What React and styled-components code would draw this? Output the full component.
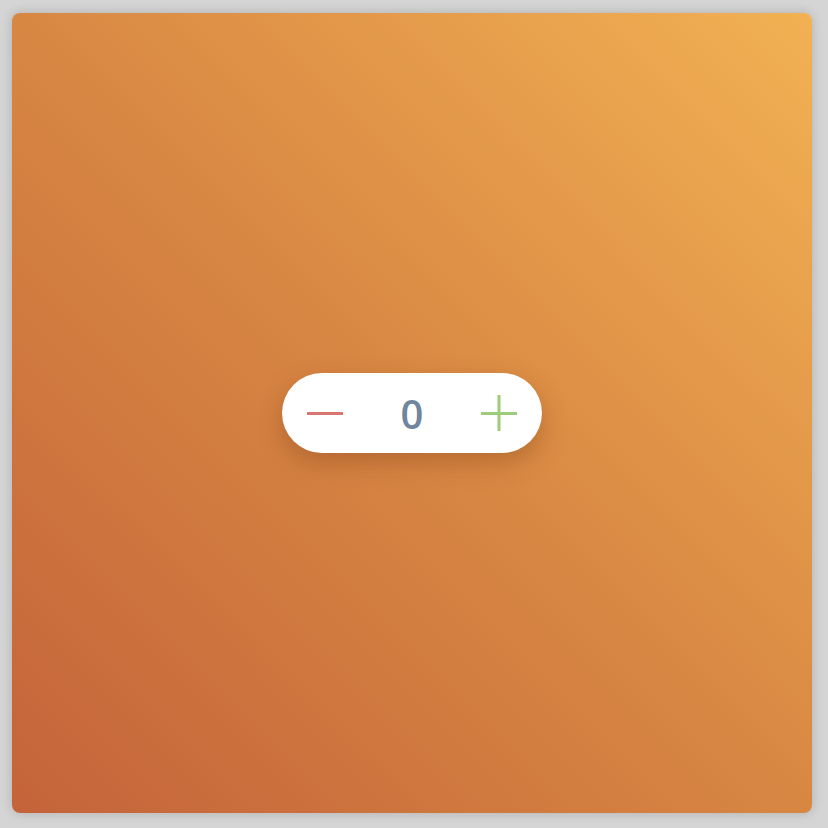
import React, { useState } from "react";
import styled, { createGlobalStyle } from "styled-components";

const GlobalStyle = createGlobalStyle`
  html, body {
    margin: 0;
    padding: 0;
    background: #d5d5d5;
    font-family: "Liberation Sans", Arial, sans-serif;
  }
`;

const Page = styled.div`
  padding: 13px 0 0 12px;
  height: 828px;
  box-sizing: border-box;
`;

const Card = styled.div`
  width: 800px;
  height: 800px;
  border-radius: 8px;
  background: linear-gradient(45deg, #c4633a 0%, #d88743 50%, #f2b153 100%);
  box-shadow: 0 0 12px rgba(0, 0, 0, 0.18);
  display: flex;
  align-items: center;
  justify-content: center;
`;

const Counter = styled.div`
  width: 260px;
  height: 80px;
  border-radius: 40px;
  background: #fff;
  box-shadow: 0 10px 24px rgba(120, 60, 20, 0.35);
  display: flex;
  align-items: center;
  justify-content: space-between;
  padding: 0 25px;
  box-sizing: border-box;
`;

const IconButton = styled.button`
  border: none;
  background: none;
  padding: 0;
  width: 36px;
  height: 36px;
  display: flex;
  align-items: center;
  justify-content: center;
  cursor: pointer;
  color: ${(p) => p.$color};
`;

const Value = styled.span`
  font-family: "Open Sans", "Liberation Sans", sans-serif;
  font-size: 40px;
  font-weight: 600;
  color: #70869f;
  line-height: 1;
  margin-top: 2px;
`;

const Minus = () => (
  <svg width="36" height="36" viewBox="0 0 36 36">
    <rect x="0" y="17" width="36" height="3" fill="currentColor" />
  </svg>
);

const Plus = () => (
  <svg width="36" height="36" viewBox="0 0 36 36">
    <rect x="0" y="17" width="36" height="3" fill="currentColor" />
    <rect x="16.5" y="0" width="3" height="36" fill="currentColor" />
  </svg>
);

export default function App() {
  const [count, setCount] = useState(0);
  return (
    <>
      <GlobalStyle />
      <Page>
        <Card>
          <Counter>
            <IconButton $color="#d9766f" onClick={() => setCount(count - 1)}>
              <Minus />
            </IconButton>
            <Value>{count}</Value>
            <IconButton $color="#9dcc7a" onClick={() => setCount(count + 1)}>
              <Plus />
            </IconButton>
          </Counter>
        </Card>
      </Page>
    </>
  );
}
